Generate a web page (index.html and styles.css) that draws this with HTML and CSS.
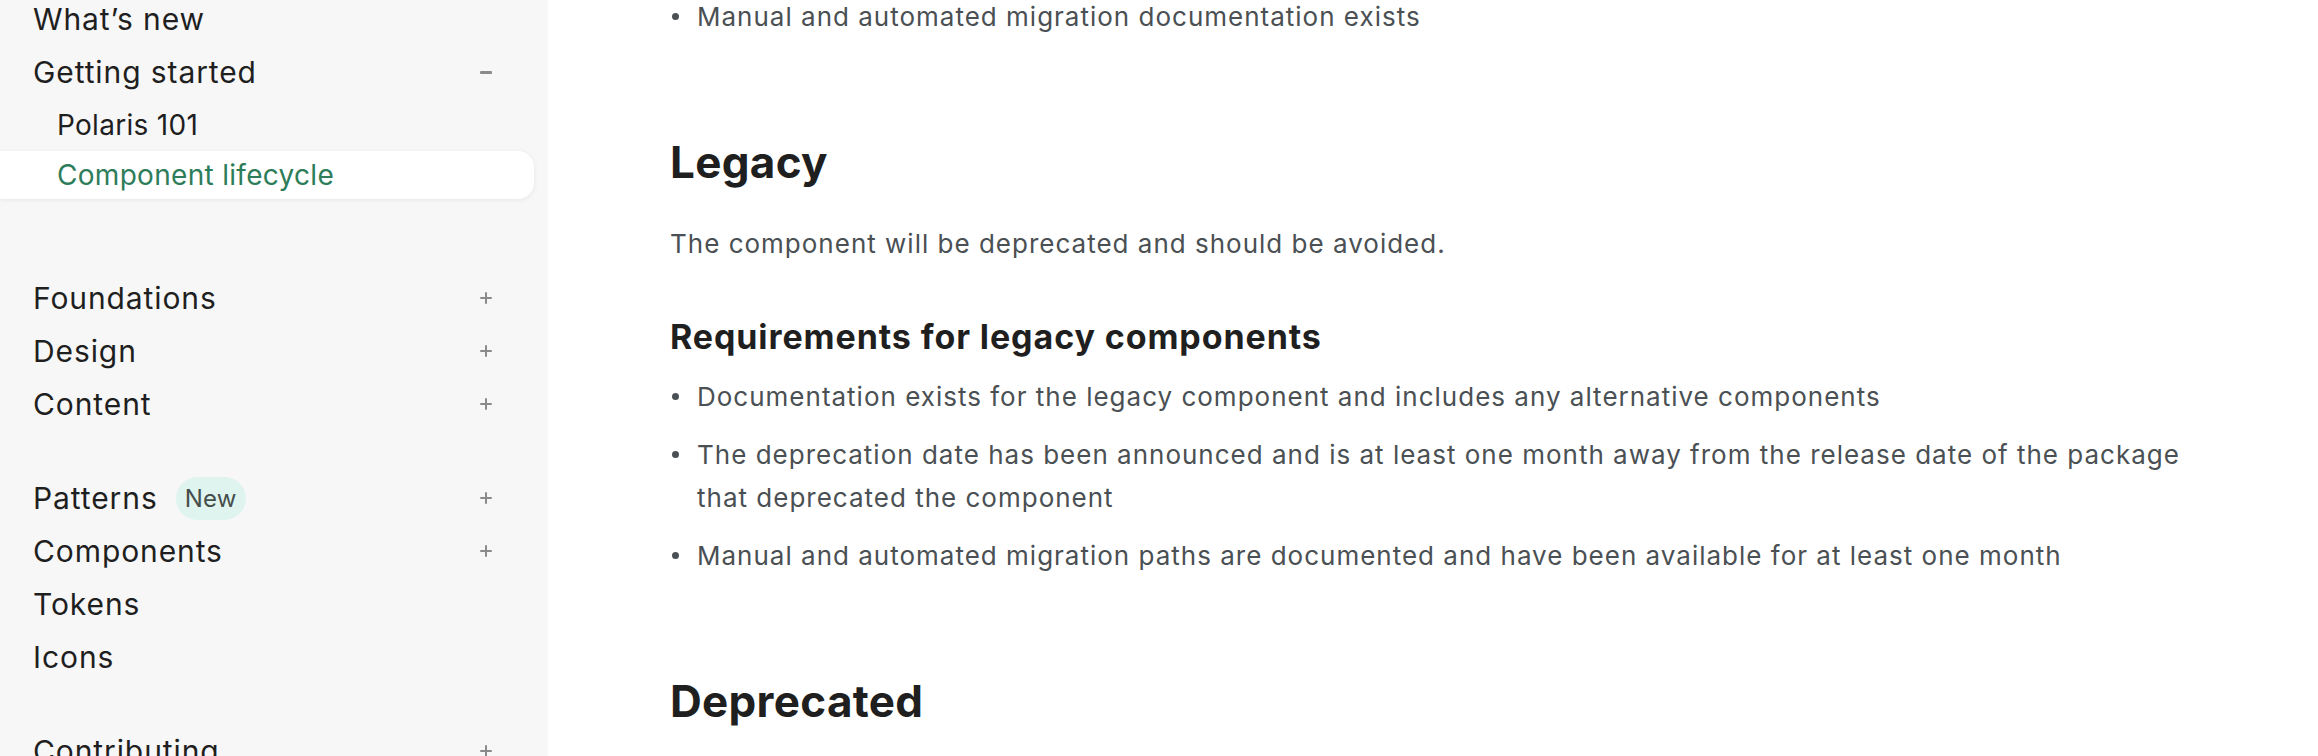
FILE: index.html
```html
<!DOCTYPE html>
<html lang="en">
<head>
<meta charset="utf-8">
<title>Component lifecycle</title>
<link rel="stylesheet" href="styles.css">
</head>
<body>
<div class="page">
  <nav class="sidebar">
    <div class="nav-scroll">
      <div class="group">
        <a class="nav-item">What’s new</a>
        <a class="nav-item">Getting started<span class="toggle minus"></span></a>
        <div class="sub-list">
          <a class="sub-item">Polaris 101</a>
          <a class="sub-item active">Component lifecycle</a>
        </div>
      </div>
      <div class="group">
        <a class="nav-item">Foundations<span class="toggle plus"></span></a>
        <a class="nav-item">Design<span class="toggle plus"></span></a>
        <a class="nav-item">Content<span class="toggle plus"></span></a>
      </div>
      <div class="group">
        <a class="nav-item"><span class="label">Patterns<span class="badge">New</span></span><span class="toggle plus"></span></a>
        <a class="nav-item">Components<span class="toggle plus"></span></a>
        <a class="nav-item">Tokens</a>
        <a class="nav-item">Icons</a>
      </div>
      <div class="group">
        <a class="nav-item">Contributing<span class="toggle plus"></span></a>
      </div>
    </div>
  </nav>
  <main class="main">
    <article class="article">
      <ul class="list first-list">
        <li>Manual and automated migration documentation exists</li>
      </ul>
      <h2 class="h2">Legacy</h2>
      <p class="para">The component will be deprecated and should be avoided.</p>
      <h3 class="h3">Requirements for legacy components</h3>
      <ul class="list">
        <li>Documentation exists for the legacy component and includes any alternative components</li>
        <li>The deprecation date has been announced and is at least one month away from the release date of the package that deprecated the component</li>
        <li>Manual and automated migration paths are documented and have been available for at least one month</li>
      </ul>
      <h2 class="h2">Deprecated</h2>
    </article>
  </main>
</div>
</body>
</html>
```
FILE: styles.css
```css
* { box-sizing: border-box; }
html, body { margin: 0; padding: 0; }
body {
  font-family: Inter, "Noto Sans", "Liberation Sans", sans-serif;
  background: #ffffff;
  color: #1f1f1f;
  width: 2318px;
  height: 756px;
  overflow: hidden;
}
.page {
  display: flex;
  height: 756px;
  overflow: hidden;
}
.sidebar {
  width: 548px;
  flex: 0 0 548px;
  background: #f7f7f7;
  height: 756px;
  overflow: hidden;
}
.nav-scroll {
  margin-top: -7.5px;
  padding-right: 14px;
}
.group + .group { margin-top: 41px; }
.group:first-child { padding-bottom: 32px; }
.nav-item {
  display: flex;
  align-items: center;
  justify-content: space-between;
  height: 53px;
  padding: 0 41px 0 33px;
  font-size: 30px;
  line-height: 53px;
  color: #1f1f1f;
  letter-spacing: 0.9px;
  text-decoration: none;
}
.label { display: flex; align-items: center; }
.badge {
  display: inline-flex;
  align-items: center;
  height: 43px;
  margin-left: 18px;
  padding: 0 9px;
  border-radius: 22px;
  background: #e0f4ef;
  color: #454e4b;
  font-size: 24px;
  line-height: 43px;
  letter-spacing: 0.3px;
}
.toggle {
  position: relative;
  width: 14px;
  height: 14px;
  flex: 0 0 14px;
}
.toggle::before, .plus::after {
  content: "";
  position: absolute;
  background: #8a8a8a;
  border-radius: 1px;
}
.toggle::before { left: 1px; right: 1px; top: 6px; height: 2px; }
.plus::after { top: 1px; bottom: 1px; left: 6px; width: 2px; }
.minus::before { left: 1px; right: 1px; top: 6px; height: 2.5px; }
.sub-list {
  margin-top: 2px;
  display: flex;
  flex-direction: column;
  gap: 2px;
}
.sub-item {
  display: flex;
  align-items: center;
  height: 48px;
  padding-left: 57px;
  font-size: 28px;
  line-height: 48px;
  letter-spacing: 0.3px;
  color: #1f1f1f;
  text-decoration: none;
}
.sub-item.active {
  background: #ffffff;
  color: #2e7d5a;
  border-radius: 0 16px 16px 0;
  box-shadow: 0 1px 5px rgba(0, 0, 0, 0.07);
}
.main {
  flex: 1;
  padding-left: 122px;
  overflow: hidden;
}
.article {
  width: 1560px;
  margin-top: -5px;
}
.list {
  list-style: none;
  margin: 0;
  padding: 0;
  display: flex;
  flex-direction: column;
  gap: 15px;
}
.list li {
  position: relative;
  padding-left: 27px;
  font-size: 26px;
  line-height: 43px;
  letter-spacing: 1px;
  color: #4a5053;
}
.list li::before {
  content: "";
  position: absolute;
  left: 2px;
  top: 18px;
  width: 7px;
  height: 7px;
  border-radius: 50%;
  background: #4a5053;
}
.h2 {
  margin: 98px 0 0;
  font-size: 44px;
  line-height: 53px;
  font-weight: 700;
  color: #1f1f1f;
  letter-spacing: 0.3px;
}
.para {
  margin: 33px 0 0;
  font-size: 26px;
  line-height: 43px;
  letter-spacing: 1px;
  color: #4a5053;
}
.h3 {
  margin: 50px 0 16px;
  font-size: 34px;
  line-height: 44px;
  font-weight: 700;
  letter-spacing: 0.9px;
  color: #1f1f1f;
}
```
